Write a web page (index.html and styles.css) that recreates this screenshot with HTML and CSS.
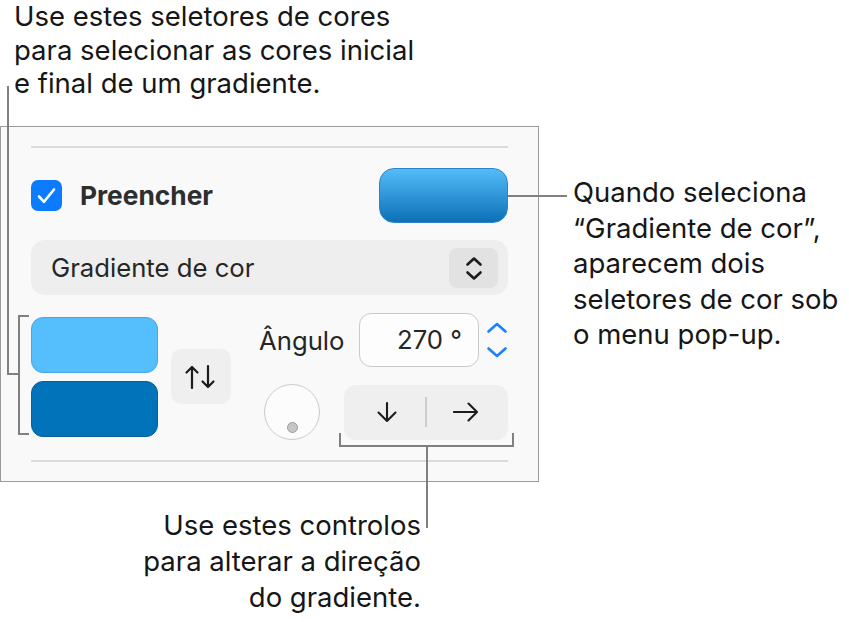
FILE: index.html
```html
<!DOCTYPE html>
<html lang="pt">
<head>
<meta charset="utf-8">
<title>Gradiente de cor</title>
<link rel="stylesheet" href="styles.css">
</head>
<body>
<div class="page">
  <p class="note note-top">Use estes seletores de cores<br>para selecionar as cores inicial<br>e final de um gradiente.</p>
  <div class="main">
    <section class="panel">
      <div class="sep"></div>
      <div class="fill-row">
        <span class="check"><svg width="31" height="31" viewBox="0 0 31 31"><path d="M8 16.5 L13 21.8 L23 9.5" fill="none" stroke="#fff" stroke-width="2.6" stroke-linecap="round" stroke-linejoin="round"/></svg></span>
        <span class="fill-label">Preencher</span>
        <span class="fill-swatch"></span>
      </div>
      <div class="popup">
        <span class="popup-text">Gradiente de cor</span>
        <span class="popup-btn"><svg width="49" height="40" viewBox="0 0 49 40"><path d="M18.5 16.5 L25 10.5 L31.5 16.5 M18.5 24.5 L25 30.5 L31.5 24.5" fill="none" stroke="#1c1c1c" stroke-width="2.6" stroke-linecap="round" stroke-linejoin="round"/></svg></span>
      </div>
      <div class="grad">
        <div class="stops">
          <span class="stop stop-a"></span>
          <span class="stop stop-b"></span>
        </div>
        <span class="swap"><svg width="60" height="55" viewBox="0 0 60 55"><path d="M21 39 V18 M15.5 23.5 L21 18 L26.5 23.5 M37 17 V38 M31.5 32.5 L37 38 L42.5 32.5" fill="none" stroke="#1c1c1c" stroke-width="2.2" stroke-linecap="round" stroke-linejoin="round"/></svg></span>
        <div class="controls">
          <div class="angle-row">
            <span class="angle-label">Ângulo</span>
            <span class="angle-field">270 °</span>
            <span class="stepper"><svg width="20" height="44" viewBox="0 0 20 44"><path d="M1.5 13.5 L10 6 L18.5 13.5 M1.5 30.5 L10 38 L18.5 30.5" fill="none" stroke="#1a82fb" stroke-width="2.6" stroke-linecap="round" stroke-linejoin="round"/></svg></span>
          </div>
          <div class="dir-row">
            <span class="dial"><span class="dial-dot"></span></span>
            <div class="seg">
              <span class="seg-item"><svg width="24" height="24" viewBox="0 0 24 24"><path d="M12 3 V21 M3.5 12.5 L12 21 L20.5 12.5" fill="none" stroke="#1c1c1c" stroke-width="2.1" stroke-linecap="round" stroke-linejoin="round"/></svg></span>
              <span class="seg-div"></span>
              <span class="seg-item"><svg width="26" height="24" viewBox="0 0 26 24"><path d="M1 12 H24 M15.5 3.5 L24 12 L15.5 20.5" fill="none" stroke="#1c1c1c" stroke-width="2.1" stroke-linecap="round" stroke-linejoin="round"/></svg></span>
            </div>
          </div>
        </div>
      </div>
      <div class="sep sep-bottom"></div>
    </section>
    <p class="note note-right">Quando seleciona<br>“Gradiente de cor”,<br>aparecem dois<br>seletores de cor sob<br>o menu pop-up.</p>
  </div>
  <p class="note note-bottom">Use estes controlos<br>para alterar a direção<br>do gradiente.</p>
  <svg class="leaders" width="849" height="622" viewBox="0 0 849 622">
    <g fill="none" stroke="#808080" stroke-width="2">
      <path d="M8 86 V375"/>
      <path d="M7 374 H19"/>
      <path d="M29 316 H19 V434 H29"/>
      <path d="M508 196 H567"/>
      <path d="M340 433 V446 H513 V433"/>
      <path d="M427 446 V528"/>
    </g>
  </svg>
</div>
</body>
</html>
```

FILE: styles.css
```css
* { box-sizing: border-box; }

html, body {
  margin: 0;
  padding: 0;
  background: #ffffff;
}

.page {
  position: relative;
  width: 849px;
  height: 622px;
  overflow: hidden;
  font-family: Inter, "Liberation Sans", Arial, sans-serif;
  color: #1a1a1a;
}

.note {
  margin: 0;
  font-size: 27.5px;
  line-height: 35.5px;
  color: #161616;
}

.note-top {
  height: 126px;
  padding: 0 0 0 14px;
  line-height: 33.5px;
}

.main {
  display: flex;
  align-items: flex-start;
}

.note-right {
  margin-left: 34px;
  margin-top: 49px;
}

.note-bottom {
  width: 421px;
  margin-top: 25px;
  text-align: right;
  line-height: 36px;
}

/* Panel */
.panel {
  width: 539px;
  padding: 19px 30px;
  background: #f9f9f9;
  border: 1px solid #9a9a9a;
  font-size: 25.7px;
  color: #262626;
}

.sep {
  height: 2px;
  background: #dcdcdc;
}

.sep-bottom {
  margin-top: 20px;
}

.fill-row {
  display: flex;
  align-items: center;
  height: 55px;
  margin-top: 20px;
}

.check {
  display: flex;
  width: 31px;
  height: 31px;
  border-radius: 7px;
  background: #0b7bff;
}

.fill-label {
  margin-left: 18px;
  font-size: 26.3px;
  font-weight: 700;
  color: #2e2e2e;
}

.fill-swatch {
  margin-left: auto;
  width: 129px;
  height: 55px;
  border-radius: 15px;
  border: 1.5px solid #2a84c6;
  background: linear-gradient(#54bcfa, #0d70b6);
}

.popup {
  display: flex;
  align-items: center;
  height: 55px;
  margin-top: 17px;
  padding: 0 10px 0 20px;
  border-radius: 14px;
  background: #eeeeee;
}

.popup-text {
  flex: 1;
}

.popup-btn {
  display: flex;
  width: 49px;
  height: 40px;
  border-radius: 8px;
  background: #e2e2e2;
}

.grad {
  display: flex;
  align-items: center;
  height: 127px;
  margin-top: 18px;
}

.stops {
  display: flex;
  flex-direction: column;
  gap: 8px;
}

.stop {
  display: block;
  width: 127px;
  height: 56px;
  border-radius: 12px;
}

.stop-a {
  background: #55befd;
  border: 1.5px solid #48a6e3;
}

.stop-b {
  background: #0073ba;
  border: 1.5px solid #07609b;
}

.swap {
  display: flex;
  width: 60px;
  height: 55px;
  margin-left: 13px;
  border-radius: 10px;
  background: #efefef;
}

.controls {
  display: flex;
  flex-direction: column;
  gap: 17px;
  width: 249px;
  margin-left: 28px;
}

.angle-row {
  display: flex;
  align-items: center;
  height: 54px;
}

.angle-label {
  color: #262626;
}

.angle-field {
  margin-left: auto;
  width: 120px;
  height: 54px;
  padding-right: 16px;
  border: 1.5px solid #c9c9c9;
  border-radius: 12px;
  background: #fdfdfd;
  text-align: right;
  line-height: 51px;
}

.stepper {
  display: flex;
  margin-left: 8px;
  margin-right: 1px;
}

.dir-row {
  display: flex;
  align-items: center;
  height: 56px;
}

.dial {
  display: flex;
  align-items: flex-end;
  justify-content: center;
  width: 56px;
  height: 56px;
  margin-left: 5px;
  padding-bottom: 6px;
  border: 1.5px solid #cbcbcb;
  border-radius: 50%;
  background: #fcfcfc;
}

.dial-dot {
  display: block;
  width: 11px;
  height: 11px;
  border-radius: 50%;
  background: #c6c6c6;
  border: 1.5px solid #9c9c9c;
}

.seg {
  display: flex;
  align-items: center;
  margin-left: auto;
  width: 164px;
  height: 55px;
  padding: 0 4px;
  border-radius: 12px;
  background: #efefef;
}

.seg-item {
  display: flex;
  flex: 1;
  justify-content: center;
}

.seg-div {
  width: 2px;
  height: 30px;
  background: #cdcdcd;
}

.leaders {
  position: absolute;
  left: 0;
  top: 0;
  pointer-events: none;
}
```
